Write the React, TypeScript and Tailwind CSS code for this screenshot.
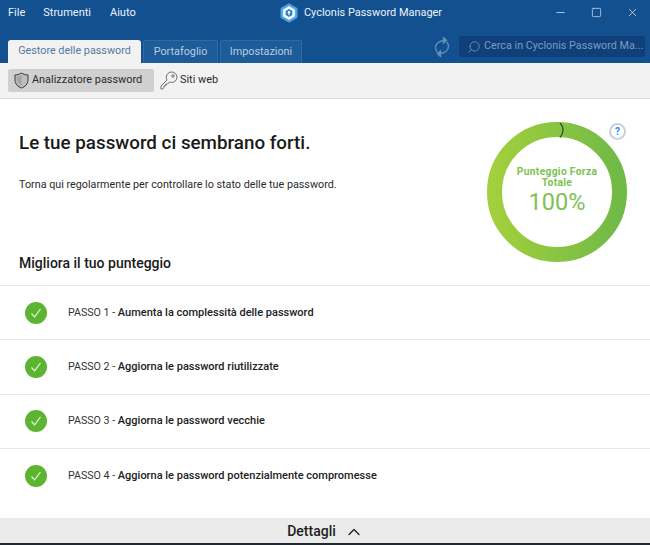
import { ChevronUp, Minus, Search, Square, X } from "lucide-react"

const font = "font-['Roboto',sans-serif]"

const steps = [
    { id: "PASSO 1", label: "Aumenta la complessità delle password" },
    { id: "PASSO 2", label: "Aggiorna le password riutilizzate" },
    { id: "PASSO 3", label: "Aggiorna le password vecchie" },
    { id: "PASSO 4", label: "Aggiorna le password potenzialmente compromesse" },
]

function Logo() {
    return (
        <svg width="20" height="20" viewBox="0 0 20 20">
            <path d="M10 0.8 L18 5.4 V14.6 L10 19.2 L2 14.6 V5.4 Z" fill="#4aa3e8" stroke="#4aa3e8" strokeLinejoin="round" />
            <path d="M10 3.4 L15.7 6.7 V13.3 L10 16.6 L4.3 13.3 V6.7 Z" fill="#fff" stroke="#fff" strokeLinejoin="round" strokeWidth="0.6" />
            <path d="M10 6 L13.4 8 V12 L10 14 L6.6 12 V8 Z" fill="#2b7fc7" />
            <circle cx="10" cy="9.3" r="1.2" fill="#fff" />
            <rect x="9.5" y="9.5" width="1" height="2.6" fill="#fff" />
        </svg>
    )
}

function SyncIcon() {
    return (
        <svg width="16" height="20" viewBox="0 0 16 20" fill="none" stroke="#5f8fbd" strokeWidth="1.4">
            <path d="M10 3.5 C5 3.8 1.5 7 1.5 10.5 C1.5 12.5 2.3 14 3.4 15" />
            <path d="M6 16.5 C11 16.2 14.5 13 14.5 9.5 C14.5 7.5 13.7 6 12.6 5" />
            <path d="M9.5 0.5 L12.5 3.5 L9.5 6 Z" fill="#5f8fbd" />
            <path d="M6.5 14 L3.5 16.5 L6.5 19.5 Z" fill="#5f8fbd" />
        </svg>
    )
}

function ShieldIcon() {
    return (
        <svg width="15" height="17" viewBox="0 0 15 17" fill="none">
            <path d="M7.5 1 C9.5 2.4 11.8 3 14 3 V8 C14 12 11 14.8 7.5 16 C4 14.8 1 12 1 8 V3 C3.2 3 5.5 2.4 7.5 1 Z" fill="#bdbdbd" stroke="#3a3a3a" strokeWidth="1" />
            <path d="M7.5 3 C6 4 4.2 4.5 2.8 4.6 V8 C2.8 10.8 4.8 13 7.5 14.1 Z" fill="#a6a6a6" />
        </svg>
    )
}

function KeyIcon() {
    return (
        <svg width="18" height="19" viewBox="0 0 18 19" fill="none" stroke="#6b6b6b" strokeWidth="1">
            <path d="M11.5 1 C14.5 1 17 3.3 17 6.2 C17 9.1 14.5 11.4 11.5 11.4 C10.8 11.4 10.2 11.3 9.6 11 L7.6 13 H5.8 V14.8 H4 V16.6 L2.6 18 H1 V15 L7 9 C6.6 8.2 6.3 7.2 6.3 6.2 C6.3 3.3 8.7 1 11.5 1 Z" />
            <circle cx="13" cy="5" r="1.2" />
        </svg>
    )
}

function ScoreRing() {
    return (
        <svg width="140" height="140" viewBox="0 0 140 140" className="block">
            <defs>
                <linearGradient id="ring" x1="0" y1="0" x2="1" y2="0">
                    <stop offset="0" stopColor="#a2cf3c" />
                    <stop offset="1" stopColor="#70ba46" />
                </linearGradient>
            </defs>
            <circle cx="70" cy="70" r="62.5" fill="none" stroke="url(#ring)" strokeWidth="15" />
            <path d="M73 1 C77 5 77 11 73 15.5" fill="none" stroke="#33532b" strokeWidth="1.3" />
        </svg>
    )
}

function StepCheck() {
    return (
        <div className="flex h-[22px] w-[22px] items-center justify-center rounded-full bg-[#5cb531]">
            <svg width="14" height="14" viewBox="0 0 14 14" fill="none" stroke="#e8f6df" strokeWidth="1.2">
                <path d="M2.5 7.5 L5.6 10.8 L11.5 3" />
            </svg>
        </div>
    )
}

export default function App() {
    return (
        <div className={`${font} flex h-[545px] w-[650px] flex-col overflow-hidden bg-white text-[#222]`}>
            <div className="relative h-[63px] shrink-0 bg-[#12508f]">
                <div className="flex h-[27px] items-center pl-[8px] text-[11px] text-[#eef3f8]">
                    <span>File</span>
                    <span className="ml-[18px]">Strumenti</span>
                    <span className="ml-[19px]">Aiuto</span>
                </div>
                <div className="absolute left-[279px] top-[3px] flex items-center gap-[5px] text-[10.95px] text-[#eef3f8]">
                    <Logo />
                    <span>Cyclonis Password Manager</span>
                </div>
                <div className="absolute right-[11px] top-[6px] flex items-center gap-[23px] text-[#dfe8f1]">
                    <Minus size={13} strokeWidth={1.4} />
                    <Square size={11} strokeWidth={1.5} className="mx-[1px]" />
                    <X size={13} strokeWidth={1.4} />
                </div>
                <div className="mt-[13px] flex h-[23px] items-end justify-between pl-[8px] pr-[5px]">
                    <div className="flex items-end gap-[2px] text-[10.8px]">
                        <div className="flex h-[23px] w-[133px] items-center justify-center rounded-t-[3px] bg-[#f2f2f2] text-[#54799f]">
                            Gestore delle password
                        </div>
                        <div className="flex h-[23px] w-[75px] items-center justify-center rounded-t-[2px] border border-b-0 border-[#2e6aa6] bg-[#1d5b99] text-[#b9cde1]">
                            Portafoglio
                        </div>
                        <div className="flex h-[23px] w-[82px] items-center justify-center rounded-t-[2px] border border-b-0 border-[#2e6aa6] bg-[#1d5b99] text-[#b9cde1]">
                            Impostazioni
                        </div>
                    </div>
                    <div className="mb-[6px] flex items-center gap-[9px]">
                        <SyncIcon />
                        <div className="flex h-[21px] w-[186px] items-center gap-[3px] whitespace-nowrap rounded-[2px] bg-[#10407a] pl-[8px] text-[10.8px] text-[#7a9cc0]">
                            <Search size={14} strokeWidth={1.3} className="-scale-x-100" />
                            <span>Cerca in Cyclonis Password Ma...</span>
                        </div>
                    </div>
                </div>
            </div>

            <div className="flex h-[36px] shrink-0 items-center gap-[6px] border-b border-[#dcdcdc] bg-[#f2f2f2] pb-[1px] pl-[8px] text-[10.9px] text-[#2b2b2b]">
                <div className="flex h-[23px] w-[146px] items-center gap-[3px] rounded-[2px] bg-[#d0d0d0] pl-[6px]">
                    <ShieldIcon />
                    <span>Analizzatore password</span>
                </div>
                <div className="flex items-center gap-[2px]">
                    <KeyIcon />
                    <span>Siti web</span>
                </div>
            </div>

            <div className="relative flex flex-1 flex-col">
                <div className="flex items-start justify-between pl-[19px] pr-[23px] pt-[23px]">
                    <div className="pt-[9px]">
                        <h1 className="text-[18.8px] font-medium leading-[24px] text-[#1a1a1a]">Le tue password ci sembrano forti.</h1>
                        <p className="mt-[23px] text-[10.77px] leading-[14px] text-[#2b2b2b]">
                            Torna qui regolarmente per controllare lo stato delle tue password.
                        </p>
                    </div>
                    <div className="relative h-[140px] w-[140px]">
                        <ScoreRing />
                        <div className="absolute inset-x-0 top-[44px] flex flex-col items-center text-[#7dc252]">
                            <span className="w-[96px] text-center text-[10.3px] font-bold leading-[11px] tracking-[0.3px]">Punteggio Forza Totale</span>
                            <span className="mt-[-1px] text-[23.5px] leading-[30px]">100%</span>
                        </div>
                        <div className="absolute right-[1px] top-[1px] flex h-[17px] w-[17px] items-center justify-center rounded-full border-2 border-[#c9cfdb] bg-white text-[10px] font-bold text-[#2f86f5]">
                            ?
                        </div>
                    </div>
                </div>

                <h2 className="-mt-[8px] pb-[13px] pl-[19px] text-[14px] font-medium leading-[18px] text-[#1a1a1a]">Migliora il tuo punteggio</h2>

                <div className="flex flex-col">
                    {steps.map((s) => (
                        <div key={s.id} className="flex h-[54.3px] items-center border-t border-[#e6e6e6] pl-[25px]">
                            <StepCheck />
                            <div className="ml-[21px] pt-[1px] text-[10.67px]">
                                <span className="text-[#333]">{s.id} - </span>
                                <span className="text-[11px] font-medium text-[#222]">{s.label}</span>
                            </div>
                        </div>
                    ))}
                </div>
            </div>

            <div className="flex h-[25px] shrink-0 items-center justify-center gap-[8px] bg-[#ebebeb] pl-[1px] pt-[2px] text-[14px] font-medium text-[#222]">
                <span>Dettagli</span>
                <ChevronUp size={20} strokeWidth={1.6} />
            </div>
            <div className="h-[2px] shrink-0 bg-[#1f2a35]" />
        </div>
    )
}
